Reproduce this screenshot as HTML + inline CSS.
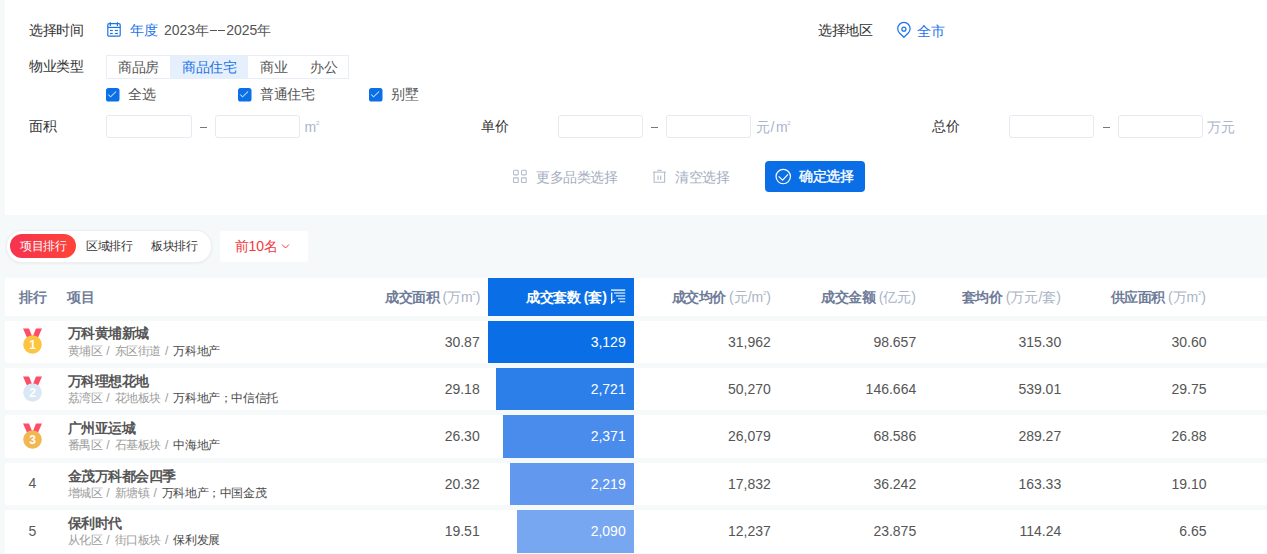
<!DOCTYPE html>
<html><head><meta charset="utf-8">
<style>
*{box-sizing:border-box;margin:0;padding:0}
html,body{width:1267px;height:554px;overflow:hidden}
body{background:#f6f9fa;font-family:"Liberation Sans",sans-serif;position:relative;color:#333}
.a{position:absolute;white-space:nowrap;line-height:20px}
.card{position:absolute;background:#fff}
.t14{font-size:14px;letter-spacing:-0.5px}
.t12{font-size:12px;letter-spacing:-0.4px}
.lbl{color:#333}
.g{color:#555}
.blue{color:#1a73e8}
.inp{position:absolute;height:23px;border:1px solid #e6e9f0;border-radius:3px;background:#fff}
.dash{position:absolute;width:7px;height:1px;background:#777}
.unit{font-size:14px;color:#aab4cb}
.m2{display:inline-block;font-size:6px;vertical-align:top;margin-top:1px;margin-left:-0.3px;line-height:10px}
.uc{letter-spacing:-0.5px}
.cb{position:absolute;width:13.5px;height:13.5px}
.hd{color:#6f7c99;font-weight:bold}
.hd span{font-weight:normal;color:#aab3c6;letter-spacing:0}
.row{position:absolute;left:5px;width:1262px;height:42.5px;background:#fff}
.nm{font-size:14px;letter-spacing:-0.5px;font-weight:bold;color:#555}
.sub{font-size:12px;letter-spacing:-0.4px;color:#9c9c9c}
.sub i{font-style:normal;display:inline-block;margin:0 5px 0 4px;letter-spacing:0}
.sub b{font-weight:normal;color:#4a4a4a}
.num{font-size:14px;color:#595959;text-align:right}
</style></head><body>

<!-- top card -->
<div class="card" style="left:5px;top:0;width:1262px;height:215px"></div>

<div class="a t14 lbl" style="left:29px;top:20px">选择时间</div>
<svg class="a" style="left:107px;top:22px" width="14" height="16" viewBox="0 0 14 16" fill="none" stroke="#1a73e8" stroke-width="1.2">
<rect x="0.8" y="1.6" width="12.4" height="12.6" rx="1.3"/><line x1="3.3" y1="0.2" x2="3.3" y2="4"/><line x1="10.4" y1="0.2" x2="10.4" y2="4"/><line x1="0.8" y1="5.4" x2="13.2" y2="5.4"/>
<line x1="3" y1="8.5" x2="5.8" y2="8.5"/><line x1="7.8" y1="8.5" x2="10.9" y2="8.5"/><line x1="3" y1="11.5" x2="5.8" y2="11.5"/><line x1="7.8" y1="11.5" x2="10.9" y2="11.5"/>
</svg>
<div class="a t14 blue" style="left:130px;top:20px">年度</div>
<div class="a g" style="left:164px;top:20px;font-size:14px"><span style="letter-spacing:0">2023</span><span style="letter-spacing:-0.5px">年</span><span style="display:inline-block;width:7px;height:1.3px;background:#555;vertical-align:middle;margin:0 1.5px 0 1px;position:relative;top:-1px"></span><span style="display:inline-block;width:7px;height:1.3px;background:#555;vertical-align:middle;margin:0 1px 0 0;position:relative;top:-1px"></span><span>2025</span><span style="letter-spacing:-0.5px">年</span></div>

<div class="a t14 lbl" style="left:818px;top:20px">选择地区</div>
<svg class="a" style="left:897px;top:21px" width="14" height="18" viewBox="0 0 14 18" fill="none" stroke="#1a73e8" stroke-width="1.2" stroke-linejoin="round">
<path d="M6.9 16.3 L2.5 12 A6.2 6.2 0 1 1 11.3 12 Z"/><circle cx="6.9" cy="8.2" r="2"/>
</svg>
<div class="a t14 blue" style="left:917px;top:21px">全市</div>

<div class="a t14 lbl" style="left:29px;top:56px">物业类型</div>
<div class="a" style="left:106px;top:55px;width:243px;height:24px;border:1px solid #e8eef8"></div>
<div class="a" style="left:170px;top:56px;width:78px;height:22px;background:#e6f0fc"></div>
<div class="a t14 g" style="left:118px;top:57px">商品房</div>
<div class="a t14 blue" style="left:182px;top:57px">商品住宅</div>
<div class="a t14 g" style="left:260px;top:57px">商业</div>
<div class="a t14 g" style="left:310px;top:57px">办公</div>

<div class="cb" style="left:106px;top:87.6px"><svg width="13.5" height="13.5" viewBox="0 0 13.5 13.5"><rect width="13.5" height="13.5" rx="2.6" fill="#0b6fe8"/><path d="M2.3 6.5 L4.5 8.9 L10.1 3.5" fill="none" stroke="#fff" stroke-width="1"/></svg></div>
<div class="cb" style="left:238px;top:87.6px"><svg width="13.5" height="13.5" viewBox="0 0 13.5 13.5"><rect width="13.5" height="13.5" rx="2.6" fill="#0b6fe8"/><path d="M2.3 6.5 L4.5 8.9 L10.1 3.5" fill="none" stroke="#fff" stroke-width="1"/></svg></div>
<div class="cb" style="left:369px;top:87.6px"><svg width="13.5" height="13.5" viewBox="0 0 13.5 13.5"><rect width="13.5" height="13.5" rx="2.6" fill="#0b6fe8"/><path d="M2.3 6.5 L4.5 8.9 L10.1 3.5" fill="none" stroke="#fff" stroke-width="1"/></svg></div>
<div class="a t14 g" style="left:128px;top:83.8px">全选</div>
<div class="a t14 g" style="left:260px;top:83.8px">普通住宅</div>
<div class="a t14 g" style="left:391px;top:83.8px">别墅</div>

<div class="a t14 lbl" style="left:29px;top:116px">面积</div>
<div class="inp" style="left:106px;top:115px;width:86px"></div>
<div class="dash" style="left:200px;top:127px"></div>
<div class="inp" style="left:215px;top:115px;width:85px"></div>
<div class="a unit" style="left:304.5px;top:117px">m<span class="m2">2</span></div>

<div class="a t14 lbl" style="left:481px;top:116px">单价</div>
<div class="inp" style="left:558px;top:115px;width:85px"></div>
<div class="dash" style="left:651px;top:127px"></div>
<div class="inp" style="left:666px;top:115px;width:85px"></div>
<div class="a unit" style="left:756px;top:117px"><span class="uc">元</span><span style="margin:0 1.5px 0 1px">/</span>m<span class="m2">2</span></div>

<div class="a t14 lbl" style="left:932px;top:116px">总价</div>
<div class="inp" style="left:1009px;top:115px;width:85px"></div>
<div class="dash" style="left:1103px;top:127px"></div>
<div class="inp" style="left:1118px;top:115px;width:85px"></div>
<div class="a unit uc" style="left:1207px;top:117px">万元</div>

<!-- buttons -->
<svg class="a" style="left:513px;top:169px" width="14" height="15" viewBox="0 0 14 15" fill="none" stroke="#b3bbcb" stroke-width="1.1">
<rect x="0.55" y="1.3" width="4.7" height="4.6" rx="0.8"/><rect x="8.5" y="1.3" width="4.7" height="4.6" rx="0.8"/><rect x="0.55" y="8.9" width="4.7" height="4.6" rx="0.8"/><rect x="8.5" y="8.9" width="4.7" height="4.6" rx="0.8"/>
</svg>
<div class="a t14" style="left:536px;top:166.5px;color:#a6aebf">更多品类选择</div>
<svg class="a" style="left:652px;top:169px" width="15" height="15" viewBox="0 0 15 15" fill="none" stroke="#b3bbcb" stroke-width="1.1">
<line x1="1" y1="3.1" x2="14" y2="3.1"/><line x1="5.4" y1="1.3" x2="9.7" y2="1.3"/><path d="M2.1 3.1 V13.2 H12.6 V3.1"/><line x1="6" y1="6.6" x2="6" y2="11"/><line x1="8.7" y1="6.6" x2="8.7" y2="11"/>
</svg>
<div class="a t14" style="left:675px;top:166.5px;color:#a6aebf">清空选择</div>
<div class="a" style="left:764.5px;top:161px;width:100.5px;height:31px;border-radius:4px;background:#0a6fe6"></div>
<svg class="a" style="left:775px;top:168px" width="17" height="17" viewBox="0 0 17 17" fill="none" stroke="#fff" stroke-width="1.2">
<circle cx="8.25" cy="8.55" r="7.2"/><path d="M3.6 8.4 L7.6 12.2 L13 6.3"/>
</svg>
<div class="a t14" style="left:799px;top:166.3px;color:#fff;-webkit-text-stroke:0.35px #fff">确定选择</div>

<!-- tabs -->
<div class="a" style="left:7px;top:231px;width:204px;height:30.5px;border-radius:15px;background:#fff;box-shadow:0 0 0 1px #eef0f3,0 0.5px 3px 0.5px rgba(0,0,0,0.09)"></div>
<div class="a" style="left:10px;top:234px;width:66px;height:23.5px;border-radius:12px;background:linear-gradient(90deg,#f5334f,#ff4439)"></div>
<div class="a t12" style="left:20px;top:236px;color:#fff">项目排行</div>
<div class="a t12" style="left:86px;top:236px;color:#333">区域排行</div>
<div class="a t12" style="left:151px;top:236px;color:#333">板块排行</div>
<div class="a" style="left:220px;top:231px;width:88px;height:30.5px;border-radius:3px;background:#fff"></div>
<div class="a" style="left:235px;top:235.7px;font-size:14px;color:#f2393d"><span style="letter-spacing:-0.5px">前</span>10<span>名</span></div>
<svg class="a" style="left:281px;top:243px" width="9" height="7" viewBox="0 0 9 7" fill="none" stroke="#f2393d" stroke-width="1"><path d="M1 1.5 L4.5 5 L8 1.5"/></svg>

<!-- table header -->
<div class="card" style="left:5px;top:277.5px;width:1262px;height:38.5px"></div>
<div class="a" style="left:488px;top:277.5px;width:146px;height:38.5px;background:#0a6fe6"></div>
<div class="a t14 hd" style="left:19px;top:286.5px">排行</div>
<div class="a t14 hd" style="left:67px;top:286.5px">项目</div>
<div class="a t14 hd" style="right:786.5px;top:286.5px">成交面积 <span>(万m<span class="m2">2</span>)</span></div>
<div class="a t14 hd" style="right:660px;top:286.5px;color:#fff">成交套数 <span style="color:#fff;font-weight:bold">(套)</span></div>
<svg class="a" style="left:611px;top:289px" width="15" height="15" viewBox="0 0 15 15" fill="none" stroke="#fff" stroke-width="1.3">
<line x1="0" y1="1.1" x2="14.2" y2="1.1"/><line x1="3" y1="4" x2="14.2" y2="4" stroke-opacity="0.8"/><line x1="5" y1="6.9" x2="14.2" y2="6.9" stroke-opacity="0.8"/><line x1="7" y1="9.8" x2="14.2" y2="9.8" stroke-opacity="0.8"/><line x1="8.7" y1="12.7" x2="14.2" y2="12.7" stroke-opacity="0.8"/><path d="M0.7 3.6 L0.7 14 L3.8 11.6"/>
</svg>
<div class="a t14 hd" style="right:496px;top:286.5px">成交均价 <span>(元/m<span class="m2">2</span>)</span></div>
<div class="a t14 hd" style="right:351px;top:286.5px">成交金额 <span>(亿元)</span></div>
<div class="a t14 hd" style="right:206px;top:286.5px">套均价 <span>(万元/套)</span></div>
<div class="a t14 hd" style="right:61px;top:286.5px">供应面积 <span>(万m<span class="m2">2</span>)</span></div>

<!-- rows -->
<div class="row" style="top:320.5px"></div>
<div class="a" style="left:488px;top:320.5px;width:146px;height:42.5px;background:#0a6fe6"></div>
<svg class="a" style="left:22px;top:328.1px" width="21" height="27" viewBox="0 0 21 27">
<path d="M1 0.5 L7 0.5 L10 8 L5 9.5 Z" fill="#ff4d67"/><path d="M20 0.5 L14 0.5 L11 8 L16 9.5 Z" fill="#ff4d67"/>
<circle cx="10.5" cy="16.5" r="9.3" fill="#fcc43f"/>
<text x="10.5" y="20.9" text-anchor="middle" font-family="Liberation Sans" font-weight="bold" font-size="12" fill="#fff">1</text></svg>
<div class="a nm" style="left:67.5px;top:323.3px">万科黄埔新城</div>
<div class="a sub" style="left:67.5px;top:340.6px">黄埔区<i>/</i>东区街道<i>/</i><b>万科地产</b></div>
<div class="a num" style="right:787.3px;top:331.5px;color:#555">30.87</div>
<div class="a num" style="right:641.3px;top:331.5px;color:#fff">3,129</div>
<div class="a num" style="right:496.20000000000005px;top:331.5px;color:#555">31,962</div>
<div class="a num" style="right:350.79999999999995px;top:331.5px;color:#555">98.657</div>
<div class="a num" style="right:205.79999999999995px;top:331.5px;color:#555">315.30</div>
<div class="a num" style="right:60.5px;top:331.5px;color:#555">30.60</div>
<div class="row" style="top:367.9px"></div>
<div class="a" style="left:496px;top:367.9px;width:138px;height:42.5px;background:#2c7fe9"></div>
<svg class="a" style="left:22px;top:375.5px" width="21" height="27" viewBox="0 0 21 27">
<path d="M1 0.5 L7 0.5 L10 8 L5 9.5 Z" fill="#ff4d67"/><path d="M20 0.5 L14 0.5 L11 8 L16 9.5 Z" fill="#ff4d67"/>
<circle cx="10.5" cy="16.5" r="9.3" fill="#d8e8f4"/>
<text x="10.5" y="20.9" text-anchor="middle" font-family="Liberation Sans" font-weight="bold" font-size="12" fill="#fff">2</text></svg>
<div class="a nm" style="left:67.5px;top:370.7px">万科理想花地</div>
<div class="a sub" style="left:67.5px;top:388.0px">荔湾区<i>/</i>花地板块<i>/</i><b>万科地产；中信信托</b></div>
<div class="a num" style="right:787.3px;top:378.9px;color:#555">29.18</div>
<div class="a num" style="right:641.3px;top:378.9px;color:#fff">2,721</div>
<div class="a num" style="right:496.20000000000005px;top:378.9px;color:#555">50,270</div>
<div class="a num" style="right:350.79999999999995px;top:378.9px;color:#555">146.664</div>
<div class="a num" style="right:205.79999999999995px;top:378.9px;color:#555">539.01</div>
<div class="a num" style="right:60.5px;top:378.9px;color:#555">29.75</div>
<div class="row" style="top:415.3px"></div>
<div class="a" style="left:503px;top:415.3px;width:131px;height:42.5px;background:#4a8ceb"></div>
<svg class="a" style="left:22px;top:422.90000000000003px" width="21" height="27" viewBox="0 0 21 27">
<path d="M1 0.5 L7 0.5 L10 8 L5 9.5 Z" fill="#ff4d67"/><path d="M20 0.5 L14 0.5 L11 8 L16 9.5 Z" fill="#ff4d67"/>
<circle cx="10.5" cy="16.5" r="9.3" fill="#f2b750"/>
<text x="10.5" y="20.9" text-anchor="middle" font-family="Liberation Sans" font-weight="bold" font-size="12" fill="#fff">3</text></svg>
<div class="a nm" style="left:67.5px;top:418.1px">广州亚运城</div>
<div class="a sub" style="left:67.5px;top:435.40000000000003px">番禺区<i>/</i>石基板块<i>/</i><b>中海地产</b></div>
<div class="a num" style="right:787.3px;top:426.3px;color:#555">26.30</div>
<div class="a num" style="right:641.3px;top:426.3px;color:#fff">2,371</div>
<div class="a num" style="right:496.20000000000005px;top:426.3px;color:#555">26,079</div>
<div class="a num" style="right:350.79999999999995px;top:426.3px;color:#555">68.586</div>
<div class="a num" style="right:205.79999999999995px;top:426.3px;color:#555">289.27</div>
<div class="a num" style="right:60.5px;top:426.3px;color:#555">26.88</div>
<div class="row" style="top:462.7px"></div>
<div class="a" style="left:510.4px;top:462.7px;width:123.60000000000002px;height:42.5px;background:#6299ee"></div>
<div class="a num" style="left:28.5px;top:473.4px">4</div>
<div class="a nm" style="left:67.5px;top:465.5px">金茂万科都会四季</div>
<div class="a sub" style="left:67.5px;top:482.8px">增城区<i>/</i>新塘镇<i>/</i><b>万科地产；中国金茂</b></div>
<div class="a num" style="right:787.3px;top:473.7px;color:#555">20.32</div>
<div class="a num" style="right:641.3px;top:473.7px;color:#fff">2,219</div>
<div class="a num" style="right:496.20000000000005px;top:473.7px;color:#555">17,832</div>
<div class="a num" style="right:350.79999999999995px;top:473.7px;color:#555">36.242</div>
<div class="a num" style="right:205.79999999999995px;top:473.7px;color:#555">163.33</div>
<div class="a num" style="right:60.5px;top:473.7px;color:#555">19.10</div>
<div class="row" style="top:510.1px"></div>
<div class="a" style="left:517.3px;top:510.1px;width:116.70000000000005px;height:42.5px;background:#77a7f0"></div>
<div class="a num" style="left:28.5px;top:520.8000000000001px">5</div>
<div class="a nm" style="left:67.5px;top:512.9px">保利时代</div>
<div class="a sub" style="left:67.5px;top:530.2px">从化区<i>/</i>街口板块<i>/</i><b>保利发展</b></div>
<div class="a num" style="right:787.3px;top:521.1px;color:#555">19.51</div>
<div class="a num" style="right:641.3px;top:521.1px;color:#fff">2,090</div>
<div class="a num" style="right:496.20000000000005px;top:521.1px;color:#555">12,237</div>
<div class="a num" style="right:350.79999999999995px;top:521.1px;color:#555">23.875</div>
<div class="a num" style="right:205.79999999999995px;top:521.1px;color:#555">114.24</div>
<div class="a num" style="right:60.5px;top:521.1px;color:#555">6.65</div>

</body></html>
